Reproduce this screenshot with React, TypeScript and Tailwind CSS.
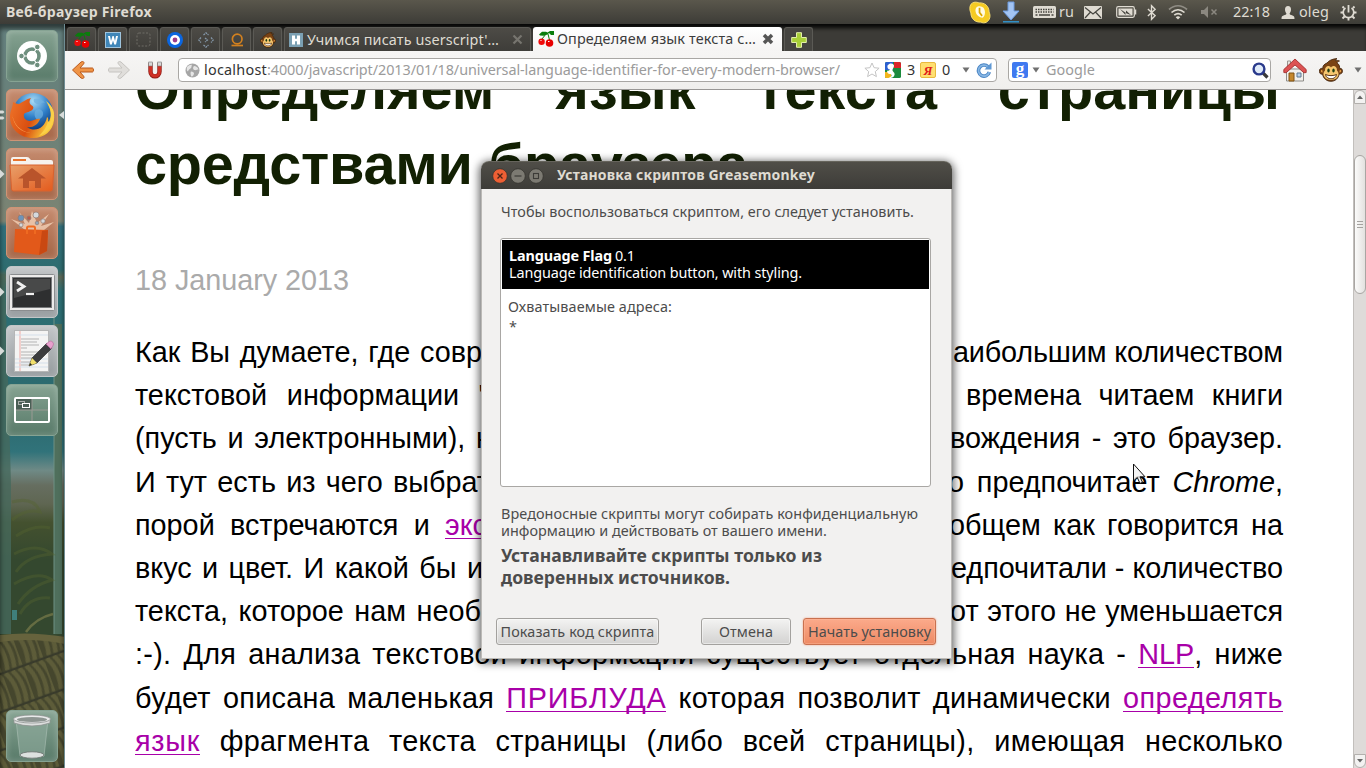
import { useLayoutEffect, useRef, useState, type ReactNode } from "react";

const UI = "font-['Noto_Sans','Open_Sans',sans-serif]";

/** Single-line label whose tracking is adjusted so that it fills a given width. */
function T({ w, className = "", children }: { w: number; className?: string; children: ReactNode }) {
  const ref = useRef<HTMLSpanElement>(null);
  const [ls, setLs] = useState(0);
  useLayoutEffect(() => {
    const el = ref.current;
    if (!el) return;
    el.style.letterSpacing = "0px";
    const natural = el.getBoundingClientRect().width;
    const n = (el.textContent || "").length || 1;
    const next = (w - natural) / n;
    el.style.letterSpacing = `${next}px`;
    setLs(next);
  }, [w]);
  return (
    <span ref={ref} className={`inline-block shrink-0 self-start whitespace-nowrap ${className}`} style={{ letterSpacing: `${ls}px` }}>
      {children}
    </span>
  );
}

/* ---------- small icons ---------- */

function Cherries() {
  return (
    <svg className="h-4 w-4 shrink-0" viewBox="0 0 16 16">
      <path d="M1 3.500 4 .8h4l1.500.7L12 0h4v4h-3l-2-2-1.500 1.500-4 1.200L2 4.500Z" fill="#0a7d0c" />
      <path d="M8 3 4 8M10 3l1.500 6" stroke="#0a7d0c" strokeWidth="1" fill="none" />
      <circle cx="3.600" cy="10.800" r="3.200" fill="#f00a0a" />
      <circle cx="11.500" cy="12" r="3.800" fill="#e80000" />
      <path d="M2.500 9.500h1M10 10.500h1.500" stroke="#fff" />
    </svg>
  );
}

function Monkey({ className }: { className: string }) {
  return (
    <svg className={className} viewBox="0 0 24 24">
      <path d="M8 5c2-2.500 5-4 10-4.500-1 .8-1.500 1.800-1.500 2.300 1.500-.3 2.500-.3 4 .2-1.500.3-2.300 1.200-2.500 2 2.500 1.500 2.700 3.500 2.700 5.500 2.300-.5 3 1.500 2.800 3s-1.300 2.700-3.200 2.500C19 21 16 23.300 12 23.300S4.500 21 3.500 16.200C1.500 16.500.3 15 .3 13.300c0-2 1.400-3.500 3.400-2.800C3.700 7.500 5.500 6 8 5Z" fill="#7a4314" stroke="#3d2008" strokeWidth=".8" />
      <path d="M12 9.500C10 6.500 5.800 8 6 12.500c-2 2-2 4.500-.5 6.500 1.500 2.300 4 3 6.500 3s5-.7 6.500-3c1.500-2 1.500-4.500-.5-6.500.2-4.500-4-6-6-3Z" fill="#f5c66f" />
      <path d="M2 12.500c.5-.8 1.500-.5 1.500.5v1.500C2.300 14.700 1.700 13.500 2 12.500ZM22 12.500c-.5-.8-1.500-.5-1.500.5v1.500c1.200.2 1.800-1 1.500-2Z" fill="#e9a44a" />
      <ellipse cx="9.500" cy="12.500" rx="1.200" ry="2" fill="#1c3d10" />
      <ellipse cx="14.500" cy="12.500" rx="1.200" ry="2" fill="#1c3d10" />
      <path d="M6.500 16.500c3 1.500 8 1.500 11 0-.5 3-3 4.300-5.500 4.300s-5-1.300-5.500-4.300Z" fill="#fff" stroke="#4a2408" strokeWidth=".9" />
    </svg>
  );
}

function PinnedTab({ children }: { children: ReactNode }) {
  return (
    <div className="flex h-6 w-[29px] items-center justify-center rounded-t-[3px] border border-b-0 border-[#5b5a55] bg-gradient-to-b from-[#4d4b46] to-[#3e3d39]">
      {children}
    </div>
  );
}

function Caret() {
  return (
    <svg className="h-[6px] w-2 shrink-0" viewBox="0 0 8 6">
      <path d="M.5.500h7L4 5.500Z" fill="#707070" />
    </svg>
  );
}

/* ---------- top panel ---------- */

function TopPanel() {
  return (
    <div className={`flex h-6 shrink-0 items-center justify-between bg-gradient-to-b from-[#5a574c] to-[#3d3c37] pl-[6px] text-[#dfdbd2] ${UI}`}>
      <T w={146} className="text-[14px] leading-6 font-bold">Веб-браузер Firefox</T>
      <div className="flex h-6 w-[398px] items-center">
        <svg className="h-[23px] w-6" viewBox="0 0 24 24">
          <path d="M2.500 3.500C5 .5 8.500 1 11 2c6-.5 10.500 3.500 10.500 9.500C23.500 16 22 20 19 22c-2.500 1.200-4.500.8-6 0C7 22.500 2.500 18.500 2.500 12.500 1 9.500 1 6 2.500 3.500Z" fill="#f5cb22" stroke="#fbe173" />
          <path d="M8 7c2.500-2.500 7-1.500 8.500 1.500 1.500 3.500.5 7.500-2 9-3-.5-5.500-2-6.500-4.500C7 10.500 7 8.500 8 7Z" fill="#fffbe2" />
          <path d="M11.500 7v5l2.700 3.500" stroke="#dba800" strokeWidth="1.800" fill="none" />
        </svg>
        <svg className="ml-2.5 h-6 w-[18px]" viewBox="0 0 18 24">
          <path d="M6 2h6v9h5l-8 9-8-9h5Z" fill="#a3c4f3" stroke="#6c9be0" />
          <path d="M1 21.800h16" stroke="#2f9fe0" strokeWidth="1.300" />
        </svg>
        <svg className="ml-[13px] h-3 w-[23px]" viewBox="0 0 23 12">
          <rect width="23" height="12" rx="1.500" fill="#dfdbd2" />
          <path d="M2.500 3.500h18M2.500 6h18" stroke="#45443e" strokeWidth="1.500" strokeDasharray="1.500 1" />
          <path d="M2.500 9h2M6 9h11M18.500 9h2" stroke="#45443e" strokeWidth="1.400" />
        </svg>
        <T w={15} className="ml-[3px] text-[14.4px] leading-6">ru</T>
        <svg className="ml-[10px] h-[13px] w-[18px]" viewBox="0 0 18 13">
          <rect width="18" height="13" rx="1" fill="#dfdbd2" />
          <path d="m1 1.500 8 6.500 8-6.500M1 12l5.500-6M17 12l-5.500-6" stroke="#45443e" strokeWidth="1.200" fill="none" />
        </svg>
        <svg className="ml-[14px] h-3 w-[21px]" viewBox="0 0 21 12">
          <rect x=".7" y=".7" width="17.600" height="10.600" rx="1.500" fill="none" stroke="#dfdbd2" strokeWidth="1.200" />
          <rect x="2.500" y="2.500" width="14" height="7" fill="#dfdbd2" />
          <path d="m4 3 6 4V4.500l5 4.500-5.500-2v2Z" fill="#45443e" />
          <path d="M19.500 3.500v5" stroke="#dfdbd2" strokeWidth="1.500" />
        </svg>
        <svg className="ml-[10px] h-[17px] w-[9px]" viewBox="0 0 10 17">
          <path d="m1 4.500 8 7.500-4 4V1l4 4-8 7.500" stroke="#dfdbd2" strokeWidth="1.500" fill="none" />
        </svg>
        <svg className="ml-[12px] h-4 w-5" viewBox="0 0 20 16">
          <path d="M1 5.500c5.500-5 12.500-5 18 0" stroke="#8f8c84" strokeWidth="1.700" fill="none" />
          <path d="M3.500 8.500c4-3.700 9-3.700 13 0M6.300 11.200c2.500-2 5-2 7.400 0" stroke="#dfdbd2" strokeWidth="1.700" fill="none" />
          <path d="m10 15.500-2.300-2.300c1.500-1.200 3.100-1.200 4.600 0Z" fill="#dfdbd2" />
        </svg>
        <svg className="ml-[12px] h-3 w-[18px]" viewBox="0 0 18 12">
          <path d="M1 4h3l4-4v12L4 8H1Z" fill="#8b8880" />
          <path d="m11.500 3.500 5 5m0-5-5 5" stroke="#8b8880" strokeWidth="1.500" />
        </svg>
        <T w={37} className="ml-[15px] text-[14.4px] leading-6">22:18</T>
        <svg className="ml-[11px] h-[13px] w-3.5" viewBox="0 0 14 13">
          <path d="M7 0c2 0 3 1.500 3 3.500S9 7 8.500 7.800c.3 1 1 1.200 3 1.700 1.500.5 2 1.300 2 3.500H.5c0-2.200.5-3 2-3.500 2-.5 2.700-.7 3-1.700C5 7 4 5.500 4 3.500S5 0 7 0Z" fill="#dfdbd2" />
        </svg>
        <T w={30} className="ml-[4px] text-[14.4px] leading-6">oleg</T>
        <svg className="ml-[11px] h-[17px] w-[17px]" viewBox="0 0 17 17">
          <path d="M5.500 4a5.300 5.300 0 1 0 6 0" stroke="#dfdbd2" strokeWidth="1.700" fill="none" />
          <path d="M8.500 1v7.500" stroke="#dfdbd2" strokeWidth="1.800" />
          <path d="M4 4 2.500 2.500M13 4l1.500-1.500M3 8.500H.5M14 8.500h2.500M4.500 12.500l-2 2M12.500 12.500l2 2M8.500 14v2.500" stroke="#dfdbd2" strokeWidth="1.900" />
        </svg>
      </div>
    </div>
  );
}

/* ---------- launcher ---------- */

function Tile({ className, left, right, children }: { className: string; left?: number; right?: boolean; children: ReactNode }) {
  return (
    <div className="flex h-[52px] w-[65px] shrink-0 items-center">
      <svg className="h-3 w-[6px] shrink-0" viewBox="0 0 6 12">
        {left === 1 && <path d="M0 1.500 4.500 6 0 10.500Z" fill="#d8dcda" />}
        {left === 2 && <path d="M0 1.500h3l1.500 1.500L3 4.500H0ZM0 7.500h3L4.500 9 3 10.500H0Z" fill="#d8dcda" />}
      </svg>
      <div className={`flex h-[52px] w-[52px] items-center justify-center rounded-[5px] border shadow-[inset_0_0_6px_rgba(255,255,255,0.25)] ${className}`}>
        {children}
      </div>
      <svg className="ml-[1px] h-3 w-[5px] shrink-0" viewBox="0 0 5 12">
        {right && <path d="M5 2 0 6l5 4Z" fill="#d8dcda" />}
      </svg>
    </div>
  );
}

function Wallpaper() {
  return (
    <svg className="absolute inset-0 h-full w-full" viewBox="0 0 65 744" preserveAspectRatio="none">
      <defs>
        <linearGradient id="wall" x2="0" y2="1">
          <stop offset="0" stopColor="#64817f" />
          <stop offset=".12" stopColor="#6a8179" />
          <stop offset=".265" stopColor="#7c8473" />
          <stop offset=".272" stopColor="#33707c" />
          <stop offset=".33" stopColor="#2e6c6f" />
          <stop offset=".34" stopColor="#5d6a58" />
          <stop offset=".36" stopColor="#2c6f74" />
          <stop offset=".53" stopColor="#2c696e" />
          <stop offset=".575" stopColor="#31737a" />
          <stop offset=".6" stopColor="#6f8a86" />
          <stop offset=".62" stopColor="#666e60" />
          <stop offset=".645" stopColor="#5f6652" />
          <stop offset=".67" stopColor="#44512f" />
          <stop offset=".72" stopColor="#34482f" />
          <stop offset=".82" stopColor="#34482f" />
          <stop offset="1" stopColor="#3d4030" />
        </linearGradient>
        <pattern id="weave" width="22" height="36" patternUnits="userSpaceOnUse" patternTransform="rotate(-20)">
          <rect width="22" height="36" fill="#45462d" />
          <path d="M3 0q8 14 3 34M10.300 0q8 14 3 34M17.600 0q8 14 3 34" stroke="#5d5c39" strokeWidth="4.500" fill="none" />
          <path d="M0 35h22" stroke="#393b2b" strokeWidth="2.500" fill="none" />
        </pattern>
      </defs>
      <rect width="65" height="744" fill="url(#wall)" />
      <path d="M54 300h8v310h-8Z" fill="#4f6f5c" />
      <path d="M0 250h5l6 210v150H0Z" fill="#46695d" opacity=".8" />
      <path d="M54 245v365" stroke="#6f9184" />
      <path d="M12 478q22-6 28 10-14-4-28 8M14 530q22-12 38 0-26 2-36 18M14 560q24-14 38-4-22 6-34 24M16 512q18-12 34-8M20 590q10-18 30-16" stroke="#56652f" strokeWidth="3" fill="none" opacity=".4" />
      <path d="M26 608q10-14 27-18" stroke="#7a7c4a" strokeWidth="2.500" fill="none" opacity=".7" />
      <path d="M12 586h5v10h-5Z" fill="#3f7f7b" />
      <path d="M0 612h65v132H0Z" fill="url(#weave)" />
      <path d="M0 611q30-4 65 2v7q-34-7-65-2Z" fill="#66633d" />
    </svg>
  );
}

function Launcher() {
  const orange = "border-[#cf9475] bg-gradient-to-b from-[#c58b6e] to-[#a56647]";
  const grey = "border-[#c2c6c8] bg-gradient-to-b from-[#c2c5c7] to-[#969c9f]";
  const green = "border-[#86a393] bg-gradient-to-b from-[#86a392] to-[#587a69]";
  return (
    <div className="relative w-[65px] shrink-0 overflow-hidden">
      <Wallpaper />
      <div className="relative flex h-full flex-col gap-[7px] border-r border-[#6f8d93] pt-[6px] pb-[6px] shadow-[inset_0_5px_5px_rgba(0,0,0,0.55)]">
        <Tile className={green}>
          <svg className="h-8 w-8" viewBox="0 0 32 32">
            <circle cx="16" cy="16" r="15" fill="#fff" />
            <circle cx="16" cy="16" r="7" fill="none" stroke="#6e8f7e" strokeWidth="3.600" />
            <path d="m16 16-12 0M16 16l6.500-11M16 16l6.500 11" stroke="#fff" strokeWidth="1.200" />
            <g fill="#6e8f7e" stroke="#fff" strokeWidth="1">
              <circle cx="5.500" cy="16" r="2.800" />
              <circle cx="21.300" cy="7" r="2.800" />
              <circle cx="21.300" cy="25" r="2.800" />
            </g>
            <circle cx="16" cy="16" r="5" fill="#fff" />
          </svg>
        </Tile>
        <Tile className={orange} left={2} right>
          <svg className="h-[48px] w-[48px]" viewBox="0 0 48 48">
            <defs>
              <radialGradient id="globe" cx=".5" cy=".2" r=".8">
                <stop offset="0" stopColor="#a9dbf5" />
                <stop offset=".5" stopColor="#2f7fc8" />
                <stop offset="1" stopColor="#0b2d6b" />
              </radialGradient>
              <linearGradient id="fox" x2="1" y2=".4">
                <stop offset="0" stopColor="#f0762a" />
                <stop offset=".6" stopColor="#d94e10" />
                <stop offset="1" stopColor="#f9c93a" />
              </linearGradient>
            </defs>
            <circle cx="25" cy="22" r="20" fill="url(#globe)" />
            <path d="M26 8c5-1 9 1 11 4-4-1-5 2-8 1s-4-3-3-5ZM28 19c4-2 8 1 7 5s-4 3-4 6c-4-2-6-7-3-11Z" fill="#6fb1e0" opacity=".7" />
            <path d="M5 11c2 1 4 2 6 2 4-2 7-5 12-6-2 3-2 5 0 7 2 1 3 2 2 4-2 3-7 3-9 5-1 3 1 7 6 7 4 0 7-3 10-2-2 6-8 9-13 8 8 6 18 1 20-10 2 1 1 5 1 6 4-6 4-14-1-20 5 4 8 9 7 17-1 11-10 18-21 18C12 47 2 38 2 26c0-6 3-10 3-15Z" fill="url(#fox)" />
            <path d="M38 10c7 5 10 12 7 21-2 6-7 12-14 14 4-4 8-9 9-15l2 2c2-8 1-14-4-22Z" fill="#fbd048" />
            <path d="M4 22c1 10 8 19 19 20-9 0-18-6-19-20Z" fill="#ffb061" opacity=".7" />
          </svg>
        </Tile>
        <Tile className={orange} left={1}>
          <svg className="h-[44px] w-[46px]" viewBox="0 0 46 44">
            <defs>
              <linearGradient id="fold" x2="1" y2="1">
                <stop stopColor="#e8a06b" />
                <stop offset="1" stopColor="#e45a1c" />
              </linearGradient>
            </defs>
            <path d="M2 7q0-2 2-2h14q2 0 3 2l1 1h20q2 0 2 2v4H2Z" fill="#f6f2ee" />
            <path d="M4 7h13v2H4Z" fill="#e8732d" />
            <path d="M1 13h44l-1.500 24q0 2-2 2h-37q-2 0-2-2Z" fill="url(#fold)" stroke="#d9622e" />
            <path d="m23 16 14 10.500h-5V36h-6v-7h-6v7h-6v-9.500H9Z" fill="#b9542b" />
          </svg>
        </Tile>
        <Tile className={orange}>
          <svg className="h-[48px] w-[46px]" viewBox="0 0 46 48">
            <path d="M20 24 2 10l14 5L10 3l10 11 3-12 5 12L40 5l-8 12 13-4-15 12Z" fill="#ffe3cb" opacity=".65" />
            <g fill="#d4d9dd" stroke="#8f7a74" strokeWidth=".7">
              <circle cx="12" cy="9" r="3" fill="#6e93b8" />
              <circle cx="27" cy="6" r="3" />
              <circle cx="20" cy="9" r="2" fill="#bb5a4a" />
              <circle cx="34" cy="12" r="2.200" />
              <circle cx="12" cy="16" r="2" />
              <circle cx="28" cy="14" r="1.800" fill="#8fa3b5" />
            </g>
            <path d="m6 20 33 1-1 21-8 4-25-3Z" fill="#e2591a" />
            <path d="m33 22 6-1-1 21-8 4Z" fill="#c94812" />
            <path d="M18 25v-6q0-1.500 1.500-1.500h5q1.500 0 1.500 1.500v6" stroke="#ef6a21" strokeWidth="2" fill="none" />
          </svg>
        </Tile>
        <Tile className={grey} left={1}>
          <svg className="h-[37px] w-[46px]" viewBox="0 0 46 37">
            <rect x=".5" y=".5" width="45" height="36" rx="1" fill="#ecebea" stroke="#8a8d8f" />
            <rect x="3.500" y="3.500" width="39" height="30" fill="#2e2f30" stroke="#77797b" />
            <path d="M5 5h36v10L5 24Z" fill="#484949" />
            <path d="m8 8 7 4.500L8 17" stroke="#f1f1f1" strokeWidth="2.800" fill="none" />
            <path d="M17 20h8" stroke="#f1f1f1" strokeWidth="2.200" />
          </svg>
        </Tile>
        <Tile className={grey} left={1}>
          <svg className="h-[44px] w-[44px]" viewBox="0 0 44 44">
            <rect x="4.500" y="1.500" width="34" height="41" fill="#f4f4f3" stroke="#b5b6b6" />
            <path d="M10 2v40" stroke="#f0a9a4" />
            <path d="M5 6h33M5 30h33M5 34h33M5 38h33" stroke="#d4dfea" />
            <path d="M11 10h18M11 13h16M11 16h18M11 19h6M11 23h19M11 26h17M11 29h12M11 33h15M11 36h8" stroke="#b3b3b3" />
            <path d="m19 37 3-8 15-15 5 5-15 15Z" fill="#3b3c3e" stroke="#1f2021" strokeWidth=".6" />
            <path d="m19 37 3-8 5 5Z" fill="#f2e06b" />
            <path d="m19 37 1.200-3 1.800 1.800Z" fill="#222" />
            <path d="m36 15 4-3q2 0 3 1.500t0 3L41 20Z" fill="#e7a0cd" stroke="#b8689a" strokeWidth=".6" />
          </svg>
        </Tile>
        <Tile className={green}>
          <svg className="h-[26px] w-9" viewBox="0 0 36 26">
            <path d="M1 1h17v12H1Z" fill="#4a5f55" />
            <path d="M18 1v24M1 13h34" stroke="#9a9a94" strokeWidth="1" />
            <rect x="1" y="1" width="34" height="24" rx="1" fill="none" stroke="#fff" strokeWidth="2" />
            <rect x="4.500" y="4.500" width="6" height="3" fill="none" stroke="#aab0ac" />
            <rect x="8.500" y="6.500" width="7" height="4" fill="#4a5f55" stroke="#fff" />
          </svg>
        </Tile>
        <div className="mt-auto">
          <Tile className={green}>
            <svg className="h-[46px] w-10" viewBox="0 0 40 46">
              <path d="M4 6h32l-4 37q-12 4-24 0Z" fill="#8eaa9c" opacity=".6" stroke="#b5c8be" />
              <ellipse cx="20" cy="42" rx="12" ry="3.200" fill="#dde1df" stroke="#6a6f6c" strokeWidth=".8" />
              <path d="M2 6v4q18 6 36 0V6Z" fill="#dcdedd" stroke="#8e9290" strokeWidth=".8" />
              <ellipse cx="20" cy="6" rx="18.500" ry="4" fill="#e9eaea" stroke="#8e9290" strokeWidth=".8" />
              <ellipse cx="20" cy="6.500" rx="15" ry="2.600" fill="#8d9591" />
            </svg>
          </Tile>
        </div>
      </div>
    </div>
  );
}

/* ---------- browser chrome ---------- */

function TabStrip() {
  return (
    <div className={`flex h-[27px] shrink-0 items-end gap-[2px] bg-[#3c3b37] pl-[2px] shadow-[inset_0_6px_4px_-2px_rgba(0,0,0,0.9)] ${UI}`}>
      <PinnedTab><Cherries /></PinnedTab>
      <PinnedTab>
        <svg className="h-4 w-4" viewBox="0 0 16 16">
          <rect x=".5" y=".5" width="15" height="15" fill="#3f86b8" stroke="#9fc4dd" />
          <path d="M3 4h2l1 5 1.500-5h1.200L10 9l1-5h2l-2 8.500H9.300L8 8.500l-1.200 4H5Z" fill="#fff" />
        </svg>
      </PinnedTab>
      <PinnedTab>
        <svg className="h-4 w-4" viewBox="0 0 16 16">
          <rect x="1" y="1" width="13" height="13" rx="2" fill="none" stroke="#6f6d67" strokeDasharray="2 1.500" />
        </svg>
      </PinnedTab>
      <PinnedTab>
        <svg className="h-4 w-4" viewBox="0 0 16 16">
          <circle cx="8" cy="8" r="8" fill="#0b66e0" />
          <circle cx="8" cy="8" r="5" fill="#fff" />
          <circle cx="8" cy="8" r="2.400" fill="#9c3c8b" />
        </svg>
      </PinnedTab>
      <PinnedTab>
        <svg className="h-4 w-4" viewBox="0 0 16 16">
          <path d="M5.500 3 8 .8 10.500 3M5.500 13 8 15.200l2.500-2.200M3 5.500.8 8 3 10.500M13 5.500 15.200 8 13 10.500M7 6l2.500 2L7 10" stroke="#8598aa" strokeWidth="1.200" fill="none" strokeDasharray="2 .7" />
        </svg>
      </PinnedTab>
      <PinnedTab>
        <svg className="h-4 w-4" viewBox="0 0 16 16">
          <circle cx="8.200" cy="7" r="4.800" stroke="#d2801f" strokeWidth="1.700" fill="none" />
          <path d="M2.500 13.500h11.500" stroke="#d2801f" strokeWidth="1.700" />
        </svg>
      </PinnedTab>
      <PinnedTab><Monkey className="h-4 w-4" /></PinnedTab>
      <div className="flex h-6 w-[247px] items-center rounded-t-[3px] border border-b-0 border-[#5b5a55] bg-gradient-to-b from-[#4d4b46] to-[#3e3d39] pl-[4px] text-[#dfdbd2]">
        <svg className="h-3.5 w-3.5 shrink-0" viewBox="0 0 14 14">
          <rect width="14" height="14" fill="#7ba0b3" />
          <path d="M3 2.500h3v3.300h2V2.500h3v9H8V8.300H6v3.200H3Z" fill="#fff" />
        </svg>
        <T w={192} className="ml-[4px] text-[14.4px] leading-[23px]">Учимся писать userscript'…</T>
        <svg className="mr-[7px] ml-auto h-[11px] w-[11px]" viewBox="0 0 11 11">
          <path d="m1.500 1.500 8 8m0-8-8 8" stroke="#77756f" strokeWidth="2.200" />
        </svg>
      </div>
      <div className="flex h-6 w-[249px] items-center rounded-t-[3px] bg-gradient-to-b from-white to-[#f5f4f3] pl-[5px] text-[#3c3c3c]">
        <Cherries />
        <T w={199} className="ml-[3px] text-[14.4px] leading-[24px]">Определяем язык текста с…</T>
        <svg className="mr-[8px] ml-auto h-3 w-3" viewBox="0 0 12 12">
          <path d="m2 2 8 8m0-8-8 8" stroke="#555" strokeWidth="3.500" />
        </svg>
      </div>
      <div className="flex h-6 w-[29px] items-center justify-center rounded-t-[3px] border border-b-0 border-[#5b5a55] bg-[#454440]">
        <svg className="h-4 w-4" viewBox="0 0 16 16">
          <path d="M5.500.7h5v4.800h4.800v5h-4.800v4.800h-5v-4.800H.7v-5h4.800Z" fill="#a8cf38" stroke="#e3f0a9" />
        </svg>
      </div>
    </div>
  );
}

function NavBar() {
  const field = "flex h-6 shrink-0 items-center rounded-[4px] border border-[#a9a7a4] bg-white";
  return (
    <div className={`flex h-[39px] shrink-0 items-center border-b border-[#999795] bg-gradient-to-b from-[#f6f5f4] to-[#f0efed] pl-[6px] ${UI} text-[14.4px] leading-[22px]`}>
      <svg className="h-5 w-6 shrink-0" viewBox="0 0 24 20">
        <path d="M11.500 1.500c1.500 0 2 1.500 1 2.500L9 8h12.500c1.300 0 1.300 4 0 4H9l3.500 4c1 1 .5 2.500-1 2.500L10 18 1.500 10 10 2Z" fill="#ef9446" stroke="#b9591c" />
      </svg>
      <svg className="ml-[12px] h-5 w-6 shrink-0" viewBox="0 0 24 20">
        <path d="M12.500 1.500c-1.500 0-2 1.500-1 2.500L15 8H2.500c-1.300 0-1.300 4 0 4H15l-3.500 4c-1 1-.5 2.500 1 2.500L14 18l8.500-8L14 2Z" fill="#e0dedb" stroke="#c6c4c0" />
      </svg>
      <svg className="ml-[17px] h-[18px] w-[14px] shrink-0" viewBox="0 0 14 18">
        <path d="M2.500 2v8.500c0 6.500 9 6.500 9 0V2" stroke="#8e1a14" strokeWidth="4.400" fill="none" />
        <path d="M2.500 4v6.500c0 6 9 6 9 0V4" stroke="#cf3126" strokeWidth="3" fill="none" />
        <path d="M.5 1h4v4h-4ZM9.500 1h4v4h-4Z" fill="#d8d8d8" stroke="#777" strokeWidth=".6" />
      </svg>
      <div className={`ml-[16px] w-[819px] ${field}`}>
        <svg className="ml-[6px] h-[15px] w-[15px] shrink-0" viewBox="0 0 15 15">
          <circle cx="7.500" cy="7.500" r="7" fill="#a6a6a6" />
          <path d="M2 4c2-2 4-2.500 5-2-1 1 0 2-1 3S3 7 3 8.500C1.500 8 1.500 6 2 4ZM9 3c2 0 4 1.500 4.500 3.500-2 0-2 1-4 .5S8 4 9 3ZM6 8.500c2 0 3 1 3 2S8 13 7 13.500 5 10 6 8.500Z" fill="#e6e6e6" />
        </svg>
        <span className="ml-[4px] flex shrink-0">
          <T w={63} className="text-[#333]">localhost</T>
          <T w={573} className="text-[#9b9b9b]">:4000/javascript/2013/01/18/universal-language-identifier-for-every-modern-browser/</T>
        </span>
        <svg className="ml-[24px] h-4 w-4 shrink-0" viewBox="0 0 16 16">
          <path d="m8 1 2.100 4.700 5 .5-3.800 3.400 1.100 5L8 12l-4.400 2.600 1.100-5L.9 6.200l5-.5Z" fill="#fff" stroke="#c4c4c4" />
        </svg>
        <svg className="ml-[5px] h-4 w-4 shrink-0" viewBox="0 0 16 16">
          <rect width="16" height="16" rx="1.500" fill="#1b8a3c" />
          <path d="M0 1.500Q0 0 1.500 0H8v8H0Z" fill="#2b5fd0" />
          <path d="M9 0h5.500Q16 0 16 1.500V6H9Z" fill="#d9252a" />
          <path d="M0 10h6v6H1.500Q0 16 0 14.500Z" fill="#f3b51b" />
          <path d="M2.500 3.500c2-3 6-2.500 6.500 0 .3 2-2 3.500-1.500 5s2.500 2 2 4.500-3 3-6 3c3-1 4-3 2-4-3 0-4-2-3-3.500 1 .5 2 0 2.500-1-2 0-3-2-2.500-4Z" fill="#fff" />
        </svg>
        <T w={8} className="ml-[6px] text-[#333]">3</T>
        <div className="ml-[5px] flex h-4 w-4 shrink-0 items-center justify-center rounded-[2px] border border-[#e9b93f] bg-[#ffdf70] font-['Liberation_Serif',serif] text-[13px] leading-none font-bold text-[#e01b1b] italic">Я</div>
        <T w={8} className="ml-[6px] text-[#333]">0</T>
        <span className="ml-[12px] flex"><Caret /></span>
        <svg className="ml-[6px] h-4 w-4 shrink-0" viewBox="0 0 16 16">
          <path d="M12 4.800A5.500 5.500 0 1 0 13.300 10" stroke="#4b85c4" strokeWidth="3.600" fill="none" />
          <path d="M12 4.800A5.500 5.500 0 1 0 13.300 10" stroke="#86b6e4" strokeWidth="1.800" fill="none" />
          <path d="M15.500.5v7h-7Z" fill="#5f98d3" />
        </svg>
      </div>
      <div className={`ml-[11px] w-[263px] ${field}`}>
        <div className="ml-[3px] flex h-4 w-4 shrink-0 items-center justify-center rounded-[2px] bg-[#3f79f0] pb-[3px] font-['Liberation_Serif',serif] text-[17px] leading-none font-bold text-white">g</div>
        <span className="ml-[4px] flex"><Caret /></span>
        <T w={49} className="ml-[6px] text-[#9b9b9b]">Google</T>
        <svg className="mr-[1px] ml-auto h-[17px] w-[17px]" viewBox="0 0 17 17">
          <path d="m11 11 4.500 4.500" stroke="#3a3a3a" strokeWidth="3.200" />
          <circle cx="7" cy="7" r="5.400" fill="#dfeaf8" stroke="#2a3a8c" strokeWidth="2.400" />
        </svg>
      </div>
      <svg className="ml-[12px] h-6 w-6 shrink-0" viewBox="0 0 24 24">
        <path d="M3.500 11h17v12h-17Z" fill="#f2f0ec" stroke="#8d8b87" />
        <path d="M4.500 3h3v6h-3Z" fill="#e9e6e2" stroke="#99958f" />
        <path d="M12 1 .8 11.500v3L3 14.800l9-7.800 9 7.800 2.200-.3v-3Z" fill="#dc5353" stroke="#9c2323" strokeWidth=".8" />
        <path d="M6 15h5v8H6Z" fill="#c5872c" stroke="#805314" />
        <path d="M14 15h4v4h-4Z" fill="#bcd3ea" stroke="#5f7892" />
      </svg>
      <Monkey className="ml-[12px] h-6 w-6 shrink-0" />
      <span className="ml-[11px] flex"><Caret /></span>
    </div>
  );
}

/* ---------- article ---------- */

function Words({ w, children }: { w: string; children: ReactNode }) {
  return <div className={`shrink-0 whitespace-nowrap [text-align-last:justify] ${w}`}>{children}</div>;
}

function Row({ children }: { children: ReactNode }) {
  return <div className="flex w-[1148px] justify-between">{children}</div>;
}

function A({ w, children }: { w: number; children: ReactNode }) {
  return (
    <T w={w} className="h-[31px] border-b border-[#a800a8] leading-[34px] text-[#a800a8]">
      {children}
    </T>
  );
}

function Article() {
  return (
    <div className="h-[678px] flex-1 overflow-hidden bg-white pl-[70px] font-['Liberation_Sans',Arial,sans-serif]">
      <div className="-mt-[38px] text-[57.6px] leading-[74.9px] font-bold text-[#122003]">
        <Words w="w-[1145px]">Определяем язык текста страницы</Words>
        <div className="flex"><T w={613}>средствами браузера</T></div>
      </div>
      <div className="mt-[57px] flex text-[28.8px] leading-[43.2px] text-[#aaa]">
        <T w={214}>18 January 2013</T>
      </div>
      <div className="mt-[29px] text-[28.8px] leading-[43.2px] text-black">
        <Row>
          <Words w="w-[347px]">Как Вы думаете, где совр</Words>
          <T w={330}>аибольшим количеством</T>
        </Row>
        <Row>
          <Words w="w-[354px]">текстовой информации "</Words>
          <Words w="w-[317px]">времена читаем книги</Words>
        </Row>
        <Row>
          <Words w="w-[357px]">(пусть и электронными), н</Words>
          <Words w="w-[333px]">вождения - это браузер.</Words>
        </Row>
        <Row>
          <Words w="w-[355px]">И тут есть из чего выбрат</Words>
          <Words w="w-[335px]">о предпочитает <i>Chrome</i>,</Words>
        </Row>
        <Row>
          <Words w="w-[352px]">порой встречаются и <A w={42}>экс</A></Words>
          <Words w="w-[334px]">общем как говорится на</Words>
        </Row>
        <Row>
          <Words w="w-[348px]">вкус и цвет. И какой бы и</Words>
          <T w={332}>едпочитали - количество</T>
        </Row>
        <Row>
          <Words w="w-[346px]">текста, которое нам необ</Words>
          <Words w="w-[333px]">от этого не уменьшается</Words>
        </Row>
        <div className="tracking-[0.3px]">
          <Words w="w-[1148px]">:-). Для анализа текстовой информации существует отдельная наука - <A w={56}>NLP</A>, ниже</Words>
          <Words w="w-[1148px]">будет описана маленькая <A w={160}>ПРИБЛУДА</A> которая позволит динамически <A w={160}>определять</A></Words>
          <Words w="w-[1148px]"><A w={65}>язык</A> фрагмента текста страницы (либо всей страницы), имеющая несколько</Words>
        </div>
      </div>
    </div>
  );
}

function ScrollBar() {
  const btn = "flex h-[14px] items-center justify-center border border-[#b3b0ad] bg-[#f3f2f1]";
  return (
    <div className="flex w-[13px] shrink-0 flex-col border-l border-[#c2bfbc] bg-[#dedbd9]">
      <div className={`${btn} rounded-t-[6px]`}>
        <svg className="h-1 w-[6px]" viewBox="0 0 6 4"><path d="M0 4h6L3 .5Z" fill="#666" /></svg>
      </div>
      <div className="h-[51px]" />
      <div className="flex h-[139px] flex-col items-center justify-center gap-[2px] rounded-[6px] border border-[#a9a6a3] bg-gradient-to-r from-[#fbfbfa] to-[#e3e1df]">
        <div className="h-px w-[6px] bg-[#a5a29f]" />
        <div className="h-px w-[6px] bg-[#a5a29f]" />
        <div className="h-px w-[6px] bg-[#a5a29f]" />
      </div>
      <div className={`${btn} mt-auto rounded-b-[6px]`}>
        <svg className="h-1 w-[6px]" viewBox="0 0 6 4"><path d="M0 0h6L3 3.500Z" fill="#666" /></svg>
      </div>
    </div>
  );
}

/* ---------- dialog ---------- */

function Dialog() {
  const button = "flex h-[27px] items-center justify-center rounded-[3px] border";
  const plain = "border-[#a3a19e] bg-gradient-to-b from-[#f3f3f2] to-[#d3d2d1] shadow-[inset_0_0_0_1px_rgba(255,255,255,0.45)]";
  return (
    <div className={`absolute top-[161px] left-[481px] flex h-[498px] w-[471px] flex-col rounded-t-[8px] shadow-[0_2px_8px_2px_rgba(0,0,0,0.6)] ${UI}`}>
      <div className="flex h-7 shrink-0 items-center rounded-t-[8px] border-t border-[#66645c] bg-gradient-to-b from-[#504e48] to-[#3d3c38] pl-[11px]">
        <svg className="h-4 w-[52px] shrink-0" viewBox="0 0 52 16">
          <circle cx="8" cy="8" r="7.300" fill="#ee5f34" stroke="#35342f" strokeWidth=".8" />
          <path d="m5.500 5.500 5 5m0-5-5 5" stroke="#4c2517" strokeWidth="1.300" />
          <circle cx="26" cy="8" r="7.300" fill="#7c7a72" stroke="#35342f" strokeWidth=".8" />
          <path d="M22.500 8h7" stroke="#3c3b37" strokeWidth="1.200" />
          <circle cx="44" cy="8" r="7.300" fill="#7c7a72" stroke="#35342f" strokeWidth=".8" />
          <rect x="41.500" y="5.500" width="5" height="5" fill="none" stroke="#3c3b37" strokeWidth="1.100" />
        </svg>
        <T w={258} className="ml-[13px] text-[14px] leading-[25px] font-bold text-[#dfdbd2]">Установка скриптов Greasemonkey</T>
      </div>
      <div className="flex flex-1 flex-col border border-t-0 border-[#bcbab7] bg-[#f2f1f0] pt-[13px] text-[14.4px] leading-[17px] text-[#4c4c4c]">
        <div className="ml-[19px] flex h-5 leading-5">
          <T w={413}>Чтобы воспользоваться скриптом, его следует установить.</T>
        </div>
        <div className="mt-[16px] ml-[18px] flex h-[249px] w-[431px] flex-col rounded-[3px] border border-[#a9a7a4] bg-white p-px">
          <div className="flex h-[49px] flex-col bg-black pt-[7px] pl-[7px] text-white">
            <div className="flex h-[17px] gap-[3px]">
              <T w={103} className="font-bold">Language Flag</T>
              <T w={20}>0.1</T>
            </div>
            <T w={293}>Language identification button, with styling.</T>
          </div>
          <div className="mt-[9px] flex flex-col items-start pl-[6px]">
            <T w={164}>Охватываемые адреса:</T>
            <T w={8} className="mt-[3px] ml-[1px]">*</T>
          </div>
        </div>
        <div className="mt-[18px] ml-[19px] flex flex-col items-start">
          <T w={417}>Вредоносные скрипты могут собирать конфиденциальную</T>
          <T w={326}>информацию и действовать от вашего имени.</T>
        </div>
        <div className="mt-[5px] ml-[19px] flex flex-col items-start text-[17.6px] leading-[22px] font-bold">
          <T w={321}>Устанавливайте скрипты только из</T>
          <T w={229}>доверенных источников.</T>
        </div>
        <div className="mt-auto mb-[13px] ml-[14px] flex leading-[25px]">
          <div className={`${button} ${plain} w-[163px]`}><T w={154}>Показать код скрипта</T></div>
          <div className={`${button} ${plain} ml-[42px] w-[90px]`}><T w={54}>Отмена</T></div>
          <div className={`${button} ml-[12px] w-[133px] border-[#c9714f] bg-gradient-to-b from-[#fbaa8b] to-[#ee8a64] shadow-[inset_0_0_0_1px_rgba(255,190,160,0.4),0_0_2px_#f0a080]`}><T w={123}>Начать установку</T></div>
        </div>
      </div>
    </div>
  );
}

export default function App() {
  return (
    <div className="relative flex h-[768px] w-[1366px] flex-col overflow-hidden bg-white">
      <TopPanel />
      <div className="flex min-h-0 flex-1">
        <Launcher />
        <div className="flex min-w-0 flex-1 flex-col">
          <TabStrip />
          <NavBar />
          <div className="flex min-h-0 flex-1">
            <Article />
            <ScrollBar />
          </div>
        </div>
      </div>
      <Dialog />
      <svg className="absolute top-[463px] left-[1132px] h-[22px] w-[14px]" viewBox="0 0 14 22">
        <path d="M1.500 1v17l3.800-3.500L8 20.500l2.500-1.200L8 13.800h5Z" fill="#f2f2f2" fillOpacity=".85" stroke="#111" />
      </svg>
    </div>
  );
}
